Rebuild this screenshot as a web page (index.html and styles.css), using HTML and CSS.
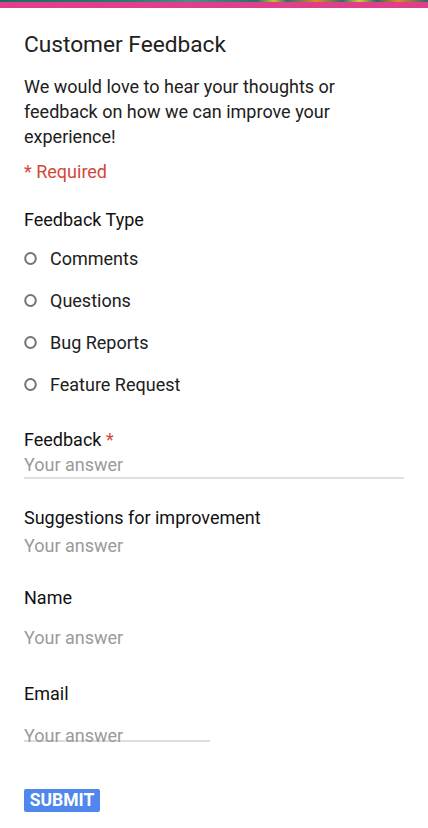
FILE: index.html
```html
<!DOCTYPE html>
<html lang="en">
<head>
<meta charset="utf-8">
<title>Customer Feedback</title>
<link rel="stylesheet" href="styles.css">
</head>
<body>
<div class="banner"><div class="banner-img"></div><div class="banner-pink"></div></div>
<main class="form">
  <h1 class="title">Customer Feedback</h1>
  <p class="desc">We would love to hear your thoughts or feedback on how we can improve your experience!</p>
  <p class="required">* Required</p>

  <section class="q q-type">
    <div class="label">Feedback Type</div>
    <ul class="options">
      <li class="option"><svg class="radio" width="13" height="13" viewBox="0 0 13 13"><ellipse cx="6.5" cy="6.5" rx="5.3" ry="5.5" fill="none" stroke="#747474" stroke-width="2"/></svg><span>Comments</span></li>
      <li class="option"><svg class="radio" width="13" height="13" viewBox="0 0 13 13"><ellipse cx="6.5" cy="6.5" rx="5.3" ry="5.5" fill="none" stroke="#747474" stroke-width="2"/></svg><span>Questions</span></li>
      <li class="option"><svg class="radio" width="13" height="13" viewBox="0 0 13 13"><ellipse cx="6.5" cy="6.5" rx="5.3" ry="5.5" fill="none" stroke="#747474" stroke-width="2"/></svg><span>Bug Reports</span></li>
      <li class="option"><svg class="radio" width="13" height="13" viewBox="0 0 13 13"><ellipse cx="6.5" cy="6.5" rx="5.3" ry="5.5" fill="none" stroke="#747474" stroke-width="2"/></svg><span>Feature Request</span></li>
    </ul>
  </section>

  <section class="q q-feedback">
    <div class="label">Feedback <span class="star">*</span></div>
    <div class="answer answer-full">Your answer</div>
  </section>

  <section class="q q-sugg">
    <div class="label">Suggestions for improvement</div>
    <div class="answer answer-sugg">Your answer</div>
  </section>

  <section class="q q-name">
    <div class="label">Name</div>
    <div class="answer answer-name">Your answer</div>
  </section>

  <section class="q q-email">
    <div class="label">Email</div>
    <div class="answer answer-email">Your answer</div>
  </section>

  <button class="submit" type="button">SUBMIT</button>
</main>
</body>
</html>
```
FILE: styles.css
```css
* { box-sizing: border-box; }
html, body { margin: 0; padding: 0; background: #fff; }
body {
  font-family: Roboto, "Liberation Sans", Arial, sans-serif;
  color: #202020;
  width: 428px;
}
.banner { height: 8px; }
.banner-img {
  height: 2px;
  background: linear-gradient(90deg, #1f6a62 0%, #2d7a72 30%, #4a8e88 45%, #2b6f69 60%, #c9c03a 64%, #2d6e66 67%, #e08a2a 74%, #2d6e68 80%, #d8cc3a 84%, #2a6a62 88%, #e08a2a 93%, #2a6a62 100%);
}
.banner-pink { height: 6px; background: #df3f8b; }

.form { padding: 0 24px; }
.title {
  margin: 23px 0 0;
  font-size: 22.7px;
  font-weight: 400;
  line-height: 28px;
  color: #212121;
}
.desc {
  margin: 15px 0 0;
  font-size: 18px;
  line-height: 25px;
  padding-right: 50px;
}
.required {
  margin: 10px 0 0;
  font-size: 18px;
  line-height: 25px;
  color: #d4473a;
}
.q { font-size: 18px; line-height: 25px; }
.label { color: #111; }
.star { color: #d4473a; }
.q-type { margin-top: 23px; }
.options {
  list-style: none;
  margin: 14px 0 0;
  padding: 0;
  display: flex;
  flex-direction: column;
  gap: 17px;
}
.option { display: flex; align-items: center; gap: 13px; }
.radio { flex: none; }
.answer { color: #9a9a9a; }
.q-feedback { margin-top: 30px; }
.answer-full { margin-top: 1px; border-bottom: 2px solid #e0e0e0; width: 380px; line-height: 24px; }
.q-sugg { margin-top: 26px; }
.answer-sugg { margin-top: 3px; }
.q-name { margin-top: 27px; }
.answer-name { margin-top: 15px; }
.q-email { margin-top: 31px; }
.answer-email {
  margin-top: 21px;
  width: 186px;
  line-height: 18px;
  height: 15px;
  border-bottom: 2px solid #dcdcdc;
  white-space: nowrap;
}
.submit {
  display: block;
  margin-top: 47px;
  height: 23px;
  width: 76px;
  padding: 0;
  border: 0;
  border-radius: 2px;
  background: #4f87ee;
  color: #fff;
  font-family: Roboto, "Liberation Sans", Arial, sans-serif;
  font-weight: 700;
  font-size: 17.5px;
  line-height: 23px;
}
```
